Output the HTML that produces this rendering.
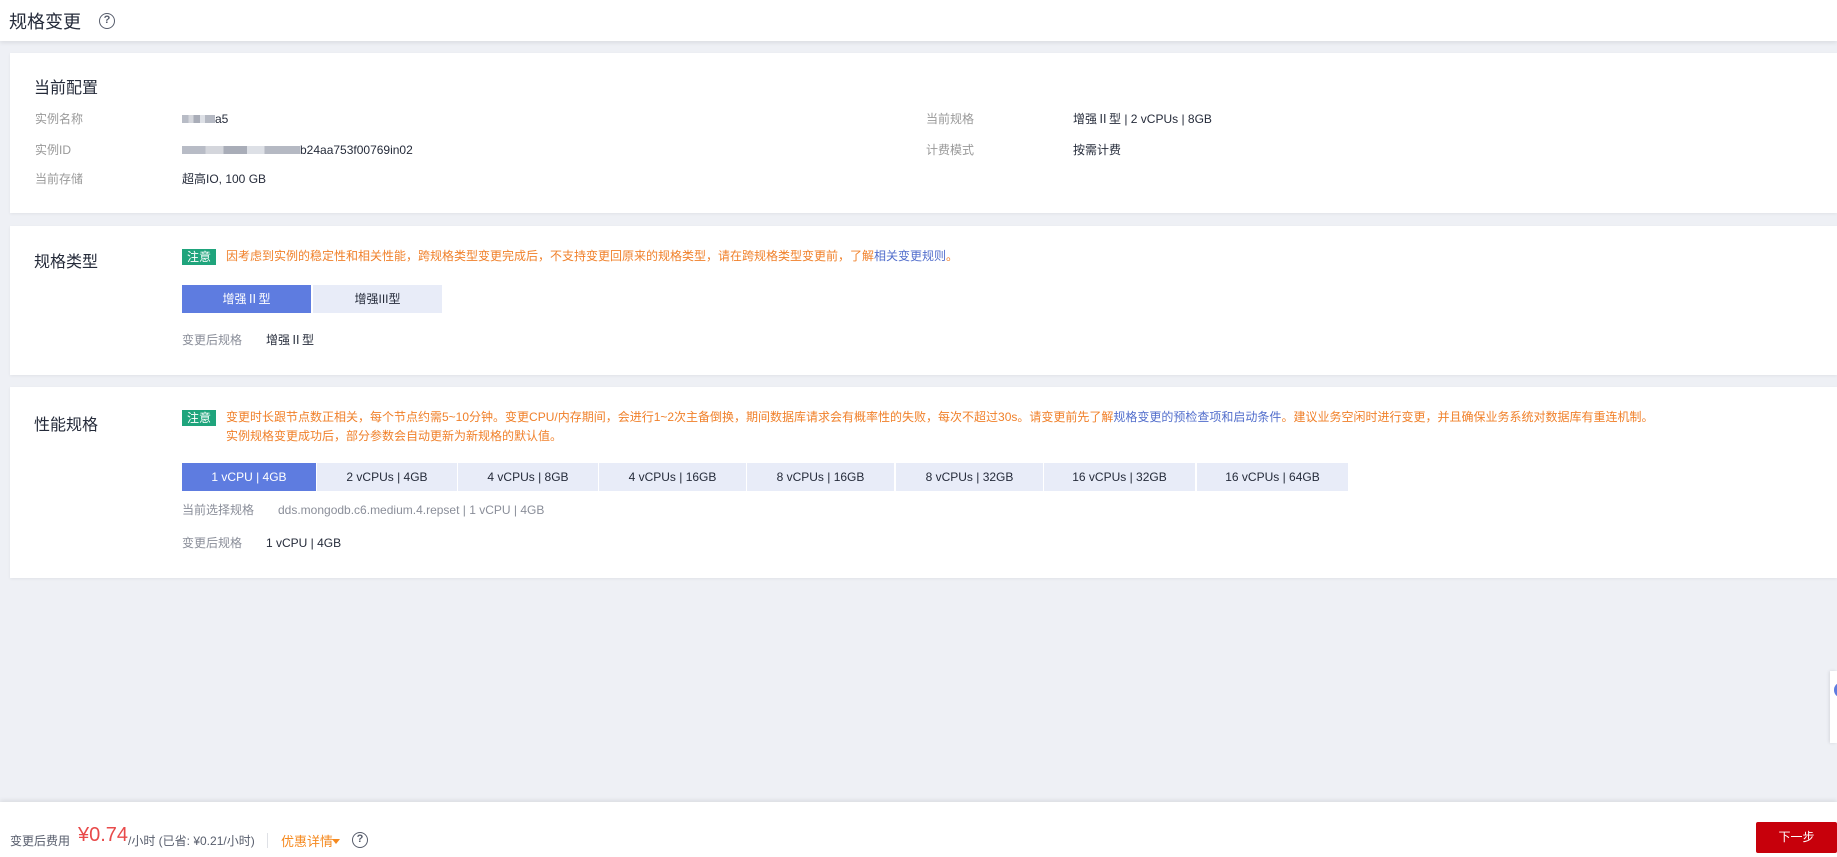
<!DOCTYPE html>
<html><head><meta charset="utf-8">
<style>
*{margin:0;padding:0;box-sizing:border-box}
body{width:1837px;height:857px;background:#eef0f5;font-family:"Liberation Sans","Noto Sans CJK SC",sans-serif;font-size:12px;color:#252b3a;position:relative;overflow:hidden}
.abs{position:absolute;white-space:nowrap}
.card .abs{line-height:18px}
.hdr{position:absolute;left:0;top:0;width:1837px;height:41px;background:#fff;box-shadow:0 2px 4px rgba(0,0,0,.08)}
.card{position:absolute;left:10px;width:1827px;background:#fff;box-shadow:0 1px 3px rgba(0,0,0,.06)}
.lbl{color:#999;}
.q{position:absolute;width:16px;height:16px;border:1.5px solid #575d6c;border-radius:50%;font-size:11px;line-height:13px;text-align:center;color:#575d6c;font-weight:bold}
.badge{position:absolute;background:#1fa47c;color:#fff;font-size:12px;line-height:16px;text-align:center;width:34px;height:16px}
.note{color:#f0802a}
.note a{color:#526ecc;text-decoration:none}
.btn{position:absolute;height:28px;line-height:28px;text-align:center;background:#e8ecf8;color:#252b3a;font-size:12px}
.btn.on{background:#5e7ce0;color:#fff}
.mask{position:absolute;height:8px;background:linear-gradient(90deg,#b8bcc6 0 20%,#d4d6dc 20% 35%,#a9adb8 35% 55%,#dde0e6 55% 70%,#b5b9c3 70% 100%)}
</style></head><body>
<div class="hdr">
 <div class="abs" style="left:9px;top:8px;font-size:18px;color:#252b3a">规格变更</div>
 <div class="q" style="left:99px;top:13px">?</div>
</div>

<div class="card" style="top:53px;height:160px">
 <div class="abs" style="left:24px;top:25px;font-size:16px;line-height:22px">当前配置</div>
 <div class="abs lbl" style="left:25px;top:57px">实例名称</div>
 <div class="mask" style="left:172px;top:62px;width:33px"></div>
 <div class="abs" style="left:205px;top:57px">a5</div>
 <div class="abs lbl" style="left:25px;top:88px">实例ID</div>
 <div class="mask" style="left:172px;top:93px;width:118px"></div>
 <div class="abs" style="left:290px;top:88px">b24aa753f00769in02</div>
 <div class="abs lbl" style="left:25px;top:117px">当前存储</div>
 <div class="abs" style="left:172px;top:117px">超高IO, 100 GB</div>
 <div class="abs lbl" style="left:916px;top:57px">当前规格</div>
 <div class="abs" style="left:1063px;top:57px">增强Ⅱ型 | 2 vCPUs | 8GB</div>
 <div class="abs lbl" style="left:916px;top:88px">计费模式</div>
 <div class="abs" style="left:1063px;top:88px">按需计费</div>
</div>

<div class="card" style="top:226px;height:149px">
 <div class="abs" style="left:24px;top:26px;font-size:16px;line-height:22px">规格类型</div>
 <div class="badge" style="left:172px;top:23px">注意</div>
 <div class="abs note" style="left:216px;top:21px">因考虑到实例的稳定性和相关性能，跨规格类型变更完成后，不支持变更回原来的规格类型，请在跨规格类型变更前，了解<a>相关变更规则</a>。</div>
 <div class="btn on" style="left:172px;top:59px;width:129px">增强Ⅱ型</div>
 <div class="btn" style="left:303px;top:59px;width:129px">增强III型</div>
 <div class="abs lbl" style="left:172px;top:105px;color:#8a8e99">变更后规格</div>
 <div class="abs" style="left:256px;top:105px">增强Ⅱ型</div>
</div>

<div class="card" style="top:387px;height:191px">
 <div class="abs" style="left:24px;top:28px;font-size:16px;line-height:22px">性能规格</div>
 <div class="badge" style="left:172px;top:23px">注意</div>
 <div class="abs note" style="left:216px;top:21px;line-height:19px">变更时长跟节点数正相关，每个节点约需5~10分钟。变更CPU/内存期间，会进行1~2次主备倒换，期间数据库请求会有概率性的失败，每次不超过30s。请变更前先了解<a>规格变更的预检查项和启动条件</a>。建议业务空闲时进行变更，并且确保业务系统对数据库有重连机制。<br>实例规格变更成功后，部分参数会自动更新为新规格的默认值。</div>
 <div class="btn on" style="left:172px;top:76px;width:134px">1 vCPU | 4GB</div>
 <div class="btn" style="left:307px;top:76px;width:140px">2 vCPUs | 4GB</div>
 <div class="btn" style="left:448px;top:76px;width:140px">4 vCPUs | 8GB</div>
 <div class="btn" style="left:589px;top:76px;width:147px">4 vCPUs | 16GB</div>
 <div class="btn" style="left:737px;top:76px;width:147px">8 vCPUs | 16GB</div>
 <div class="btn" style="left:886px;top:76px;width:147px">8 vCPUs | 32GB</div>
 <div class="btn" style="left:1034px;top:76px;width:151px">16 vCPUs | 32GB</div>
 <div class="btn" style="left:1187px;top:76px;width:151px">16 vCPUs | 64GB</div>
 <div class="abs lbl" style="left:172px;top:114px;color:#8a8e99">当前选择规格</div>
 <div class="abs" style="left:268px;top:114px;color:#8a8e99">dds.mongodb.c6.medium.4.repset | 1 vCPU | 4GB</div>
 <div class="abs lbl" style="left:172px;top:147px;color:#8a8e99">变更后规格</div>
 <div class="abs" style="left:256px;top:147px">1 vCPU | 4GB</div>
</div>

<div style="position:absolute;left:1830px;top:671px;width:7px;height:72px;background:#fff;box-shadow:-1px 0 3px rgba(0,0,0,.1)"></div>
<div style="position:absolute;left:1834px;top:683px;width:12px;height:14px;border-radius:50%;background:#5e7ce0"></div>

<div style="position:absolute;left:0;top:802px;width:1837px;height:55px;background:#fff;box-shadow:0 -2px 4px rgba(0,0,0,.08)"></div>
<div class="abs" style="left:10px;top:832px;color:#575d6c">变更后费用</div>
<div class="abs" style="left:78px;top:824px;font-size:20px;color:#e84a4a">¥0.74</div>
<div class="abs" style="left:128px;top:832px;color:#575d6c">/小时 (已省: ¥0.21/小时)</div>
<div style="position:absolute;left:267px;top:833px;width:1px;height:15px;background:#dfe1e6"></div>
<div class="abs" style="left:281px;top:831px;color:#f5891f;font-size:13px">优惠详情</div>
<div style="position:absolute;left:332px;top:839px;border-left:4px solid transparent;border-right:4px solid transparent;border-top:5px solid #f5891f"></div>
<div class="q" style="left:352px;top:832px">?</div>
<div style="position:absolute;left:1756px;top:822px;width:81px;height:31px;background:#c7000b;border-radius:2px;color:#fff;text-align:center;line-height:31px;font-size:12px">下一步</div>
</body></html>
